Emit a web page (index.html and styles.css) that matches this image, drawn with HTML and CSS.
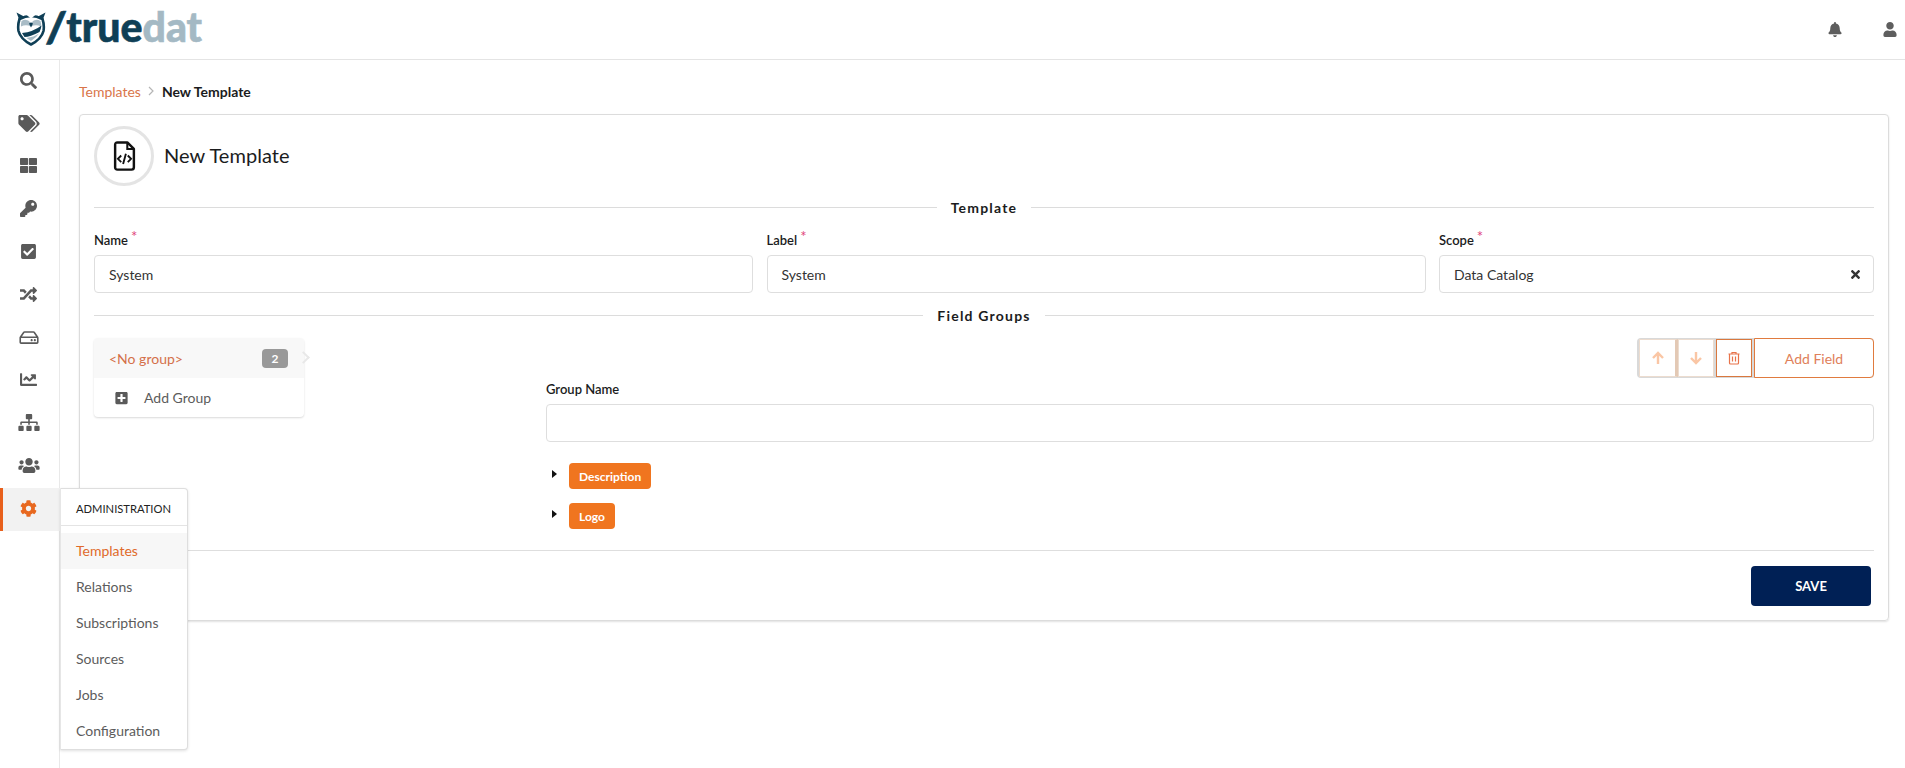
FILE: index.html
```html
<!DOCTYPE html>
<html lang="en">
<head>
<meta charset="utf-8">
<title>New Template</title>
<link rel="stylesheet" href="styles.css">
</head>
<body>
<div class="app">
  <header class="topbar">
    <div class="logo">
      <svg class="owl" viewBox="0 0 30 34" width="30" height="34">
        <path d="M3.5 7 Q15 1 26.5 7 Q28.5 13 27.5 19 Q25.5 27 15 32.5 Q4.5 27 2.5 19 Q1.5 13 3.5 7 Z" fill="none" stroke="#0f3f56" stroke-width="2.6" stroke-linejoin="round"/>
        <path d="M0.5 0.5 L8 4.5 L3.5 8.5 Z M29.5 0.5 L22 4.5 L26.5 8.5 Z" fill="#0f3f56"/>
        <path d="M10 2.5 Q15 .8 20 2.5 L15 6.5 Z" fill="#fff"/>
        <path d="M5.5 9 Q10.5 5.5 15 11 Q19.5 5.5 24.5 9 Q25.5 12 25 14.5 Q20 12 15 14.5 Q10 12 5 14.5 Q4.8 12 5.5 9 Z" fill="#a9bcc6"/>
        <path d="M13 11.5 L15 15.5 L17 11.5 L15 10.5 Z" fill="#0f3f56"/>
        <path d="M6 21 Q17 20 25.5 13.5 Q25 17 23.5 20 Q14 25 8.5 25 Z" fill="#0f3f56"/>
        <path d="M10.5 26 Q18 25 23 21.5 Q20.5 25.5 15 29 Z" fill="#a9bcc6"/>
      </svg>
      <span class="logo-text"><span class="logo-dark slash">/</span><span class="logo-dark">true</span><span class="logo-light">dat</span></span>
    </div>
    <div class="top-icons">
      <svg class="top-icon" viewBox="0 0 448 512"><path d="M224 512c35.32 0 63.97-28.65 63.97-64H160.03c0 35.35 28.65 64 63.97 64zm215.39-149.71c-19.32-20.76-55.47-51.99-55.47-154.29 0-77.7-54.48-139.9-127.94-155.16V32c0-17.67-14.32-32-31.98-32s-31.98 14.33-31.98 32v20.84C118.56 68.1 64.08 130.3 64.08 208c0 102.3-36.15 133.53-55.47 154.29-6 6.45-8.66 14.16-8.61 21.71.11 16.4 12.98 32 32.1 32h383.8c19.12 0 32-15.6 32.1-32 .05-7.55-2.61-15.27-8.61-21.71z"/></svg>
      <svg class="top-icon" viewBox="0 0 448 512"><path d="M224 256c70.7 0 128-57.3 128-128S294.7 0 224 0 96 57.3 96 128s57.3 128 128 128zm89.6 32h-16.7c-22.2 10.2-46.9 16-72.9 16s-50.6-5.8-72.9-16h-16.7C60.2 288 0 348.2 0 422.4V464c0 26.5 21.5 48 48 48h352c26.5 0 48-21.5 48-48v-41.6c0-74.2-60.2-134.4-134.4-134.4z"/></svg>
    </div>
  </header>
  <div class="body-row">
    <nav class="sidebar">
      <div class="side-item"><svg class="side-icon" viewBox="0 0 512 512"><path d="M505 442.7L405.3 343c-4.5-4.5-10.6-7-17-7H372c27.6-35.3 44-79.7 44-128C416 93.1 322.9 0 208 0S0 93.1 0 208s93.1 208 208 208c48.3 0 92.7-16.4 128-44v16.3c0 6.4 2.5 12.5 7 17l99.7 99.7c9.4 9.4 24.6 9.4 33.9 0l28.3-28.3c9.4-9.4 9.4-24.6.1-34zM208 336c-70.7 0-128-57.2-128-128 0-70.7 57.2-128 128-128 70.7 0 128 57.2 128 128 0 70.7-57.2 128-128 128z"/></svg></div>
      <div class="side-item"><svg class="side-icon wide" viewBox="0 0 640 512"><path d="M497.941 225.941L286.059 14.059A48 48 0 0 0 252.118 0H48C21.49 0 0 21.49 0 48v204.118a48 48 0 0 0 14.059 33.941l211.882 211.882c18.744 18.745 49.136 18.746 67.882 0l204.118-204.118c18.745-18.745 18.745-49.137 0-67.882zM112 160c-26.51 0-48-21.49-48-48s21.49-48 48-48 48 21.49 48 48-21.49 48-48 48zm513.941 133.823L421.823 497.941c-18.745 18.745-49.137 18.745-67.882 0l-.36-.36L527.64 323.522c16.999-16.999 26.36-39.6 26.36-63.64s-9.362-46.641-26.36-63.64L331.397 0h48.721a48 48 0 0 1 33.941 14.059l211.882 211.882c18.745 18.745 18.745 49.137 0 67.882z"/></svg></div>
      <div class="side-item"><svg class="side-icon" viewBox="0 0 512 512"><rect x="0" y="32" width="244" height="212" rx="24"/><rect x="268" y="32" width="244" height="212" rx="24"/><rect x="0" y="268" width="244" height="212" rx="24"/><rect x="268" y="268" width="244" height="212" rx="24"/></svg></div>
      <div class="side-item"><svg class="side-icon" viewBox="0 0 512 512"><path d="M512 176.001C512 273.203 433.202 352 336 352c-11.22 0-22.19-1.062-32.827-3.069l-24.012 27.014A23.999 23.999 0 0 1 261.223 384H224v40c0 13.255-10.745 24-24 24h-40v40c0 13.255-10.745 24-24 24H24c-13.255 0-24-10.745-24-24v-78.059c0-6.365 2.529-12.47 7.029-16.971l161.802-161.802C163.108 213.814 160 195.271 160 176 160 78.798 238.797.001 335.999 0 433.488-.001 512 78.511 512 176.001zM336 128c0 26.51 21.49 48 48 48s48-21.49 48-48-21.49-48-48-48-48 21.49-48 48z"/></svg></div>
      <div class="side-item"><svg class="side-icon" viewBox="0 0 448 512"><path d="M400 480H48c-26.51 0-48-21.49-48-48V80c0-26.51 21.49-48 48-48h352c26.51 0 48 21.49 48 48v352c0 26.51-21.49 48-48 48zm-204.686-98.059l184-184c6.248-6.248 6.248-16.379 0-22.627l-22.627-22.627c-6.248-6.248-16.379-6.249-22.628 0L184 302.745l-70.059-70.059c-6.248-6.248-16.379-6.248-22.628 0l-22.627 22.627c-6.248 6.248-6.248 16.379 0 22.627l104 104c6.249 6.25 16.379 6.25 22.628.001z"/></svg></div>
      <div class="side-item"><svg class="side-icon" viewBox="0 0 512 512"><path d="M504.971 359.029c9.373 9.373 9.373 24.569 0 33.941l-80 79.984c-15.01 15.01-40.971 4.49-40.971-16.971V416h-58.785a12.004 12.004 0 0 1-8.773-3.812l-70.556-75.596 53.333-57.143L352 336h32v-39.981c0-21.438 25.943-31.998 40.971-16.971l80 79.981zM12 176h84l52.781 56.551 53.333-57.143-70.556-75.596A11.999 11.999 0 0 0 122.785 96H12c-6.627 0-12 5.373-12 12v56c0 6.627 5.373 12 12 12zm372 0v39.984c0 21.46 25.961 31.98 40.971 16.971l80-79.984c9.373-9.373 9.373-24.569 0-33.941l-80-79.981C409.943 24.021 384 34.582 384 56.019V96h-58.785a12.004 12.004 0 0 0-8.773 3.812L96 336H12c-6.627 0-12 5.373-12 12v56c0 6.627 5.373 12 12 12h110.785c3.326 0 6.503-1.381 8.773-3.812L352 176h32z"/></svg></div>
      <div class="side-item"><svg class="side-icon wide-s" viewBox="0 0 576 512"><path d="M567.403 235.642L462.323 84.589A48 48 0 0 0 422.919 64H153.081a48 48 0 0 0-39.404 20.589L8.597 235.642A48.001 48.001 0 0 0 0 263.054V400c0 26.51 21.49 48 48 48h480c26.51 0 48-21.49 48-48V263.054c0-9.801-3-19.366-8.597-27.412zM153.081 112h269.838l77.913 112H75.168l77.913-112zM528 400H48V272h480v128zm-32-64c0 17.673-14.327 32-32 32s-32-14.327-32-32 14.327-32 32-32 32 14.327 32 32zm-96 0c0 17.673-14.327 32-32 32s-32-14.327-32-32 14.327-32 32-32 32 14.327 32 32z"/></svg></div>
      <div class="side-item"><svg class="side-icon" viewBox="0 0 512 512"><path d="M496 384H64V80c0-8.84-7.16-16-16-16H16C7.16 64 0 71.16 0 80v336c0 17.67 14.33 32 32 32h464c8.84 0 16-7.16 16-16v-32c0-8.84-7.16-16-16-16zM464 96H345.94c-21.38 0-32.09 25.85-16.97 40.97l32.4 32.4L288 242.75l-73.37-73.37c-12.5-12.5-32.76-12.5-45.25 0l-68.69 68.69c-6.25 6.25-6.25 16.38 0 22.63l22.62 22.62c6.25 6.25 16.38 6.25 22.63 0L192 237.25l73.37 73.37c12.5 12.5 32.76 12.5 45.25 0l96-96 32.4 32.4c15.12 15.12 40.97 4.41 40.97-16.97V112c.01-8.84-7.15-16-16-16z"/></svg></div>
      <div class="side-item"><svg class="side-icon wide" viewBox="0 0 640 512"><path d="M128 352H32c-17.67 0-32 14.33-32 32v96c0 17.67 14.33 32 32 32h96c17.67 0 32-14.33 32-32v-96c0-17.67-14.33-32-32-32zm-24-80h192v48h48v-48h192v48h48v-57.59c0-21.17-17.23-38.41-38.41-38.41H344v-64h40c17.67 0 32-14.33 32-32V32c0-17.67-14.33-32-32-32H256c-17.67 0-32 14.33-32 32v96c0 17.67 14.33 32 32 32h40v64H94.41C73.23 224 56 241.23 56 262.41V320h48v-48zm264 80h-96c-17.67 0-32 14.33-32 32v96c0 17.67 14.33 32 32 32h96c17.67 0 32-14.33 32-32v-96c0-17.67-14.33-32-32-32zm240 0h-96c-17.67 0-32 14.33-32 32v96c0 17.67 14.33 32 32 32h96c17.67 0 32-14.33 32-32v-96c0-17.67-14.33-32-32-32z"/></svg></div>
      <div class="side-item"><svg class="side-icon wide" viewBox="0 0 640 512"><path d="M96 224c35.3 0 64-28.7 64-64s-28.7-64-64-64-64 28.7-64 64 28.7 64 64 64zm448 0c35.3 0 64-28.7 64-64s-28.7-64-64-64-64 28.7-64 64 28.7 64 64 64zm32 32h-64c-17.6 0-33.5 7.1-45.1 18.6 40.3 22.1 68.9 62 75.1 109.4h66c17.7 0 32-14.3 32-32v-32c0-35.3-28.7-64-64-64zm-256 0c61.9 0 112-50.1 112-112S381.9 32 320 32 208 82.1 208 144s50.1 112 112 112zm76.8 32h-8.3c-20.8 10-43.9 16-68.5 16s-47.6-6-68.5-16h-8.3C179.6 288 128 339.6 128 403.2V432c0 26.5 21.5 48 48 48h288c26.5 0 48-21.5 48-48v-28.8c0-63.6-51.6-115.2-115.2-115.2zm-223.7-13.4C161.5 263.1 145.6 256 128 256H64c-35.3 0-64 28.7-64 64v32c0 17.7 14.3 32 32 32h65.9c6.3-47.4 34.9-87.3 75.2-109.4z"/></svg></div>
      <div class="side-item active"><svg class="side-icon" viewBox="0 0 512 512"><path d="M487.4 315.7l-42.6-24.6c4.3-23.2 4.3-47 0-70.2l42.6-24.6c4.9-2.8 7.1-8.6 5.5-14-11.1-35.6-30-67.8-54.7-94.6-3.8-4.1-10-5.1-14.8-2.3L380.8 110c-17.9-15.4-38.5-27.3-60.8-35.1V25.8c0-5.6-3.9-10.5-9.4-11.7-36.7-8.2-74.3-7.8-109.2 0-5.5 1.2-9.4 6.1-9.4 11.7V75c-22.2 7.9-42.8 19.8-60.8 35.1L88.7 85.5c-4.9-2.8-11-1.9-14.8 2.3-24.7 26.7-43.6 58.9-54.7 94.6-1.7 5.4.6 11.2 5.5 14L67.3 221c-4.3 23.2-4.3 47 0 70.2l-42.6 24.6c-4.9 2.8-7.1 8.6-5.5 14 11.1 35.6 30 67.8 54.7 94.6 3.8 4.1 10 5.1 14.8 2.3l42.6-24.6c17.9 15.4 38.5 27.3 60.8 35.1v49.2c0 5.6 3.9 10.5 9.4 11.7 36.7 8.2 74.3 7.8 109.2 0 5.5-1.2 9.4-6.1 9.4-11.7v-49.2c22.2-7.9 42.8-19.8 60.8-35.1l42.6 24.6c4.9 2.8 11 1.9 14.8-2.3 24.7-26.7 43.6-58.9 54.7-94.6 1.5-5.5-.7-11.3-5.6-14.1zM256 336c-44.1 0-80-35.9-80-80s35.9-80 80-80 80 35.9 80 80-35.9 80-80 80z"/></svg>
        <div class="popup">
          <div class="popup-head">ADMINISTRATION</div>
          <div class="popup-list">
            <div class="popup-item current">Templates</div>
            <div class="popup-item">Relations</div>
            <div class="popup-item">Subscriptions</div>
            <div class="popup-item">Sources</div>
            <div class="popup-item">Jobs</div>
            <div class="popup-item">Configuration</div>
          </div>
        </div>
      </div>
    </nav>
    <main class="content">
      <div class="crumbs"><a class="crumb-link">Templates</a>
        <svg class="crumb-sep" viewBox="0 0 6 10" width="6" height="10"><path d="M1 1 L5 5 L1 9" fill="none" stroke="#b5b5b5" stroke-width="1.2"/></svg>
        <span class="crumb-now">New Template</span></div>
      <section class="card">
        <div class="card-head">
          <div class="circle">
            <svg viewBox="0 0 24 32" width="23" height="30">
              <path d="M2 4 Q2 1.5 4.5 1.5 H15 L22 8.5 V28 Q22 30.5 19.5 30.5 H4.5 Q2 30.5 2 28 Z" fill="none" stroke="#111" stroke-width="2.6" stroke-linejoin="round"/>
              <path d="M15 2 V8.5 H22" fill="none" stroke="#111" stroke-width="2.2"/>
              <path d="M8.5 15.5 L5 19 L8.5 22.5 M15.5 15.5 L19 19 L15.5 22.5 M13.5 13.5 L10.5 24.5" fill="none" stroke="#111" stroke-width="2"/>
            </svg>
          </div>
          <h1 class="card-title">New Template</h1>
        </div>
        <div class="divider first"><span>Template</span></div>
        <div class="fields">
          <div class="field">
            <label class="lbl">Name<i class="req">*</i></label>
            <div class="input">System</div>
          </div>
          <div class="field">
            <label class="lbl">Label<i class="req">*</i></label>
            <div class="input">System</div>
          </div>
          <div class="field">
            <label class="lbl">Scope<i class="req">*</i></label>
            <div class="input select">Data Catalog
              <svg class="clear" viewBox="0 0 352 512"><path d="M242.72 256l100.07-100.07c12.28-12.28 12.28-32.19 0-44.48l-22.24-22.24c-12.28-12.28-32.19-12.28-44.48 0L176 189.28 75.93 89.21c-12.28-12.28-32.19-12.28-44.48 0L9.21 111.45c-12.28 12.28-12.28 32.19 0 44.48L109.28 256 9.21 356.07c-12.28 12.28-12.28 32.19 0 44.48l22.24 22.24c12.28 12.28 32.2 12.28 44.48 0L176 322.72l100.07 100.07c12.28 12.28 32.2 12.28 44.48 0l22.24-22.24c12.28-12.28 12.28-32.19 0-44.48L242.72 256z"/></svg>
            </div>
          </div>
        </div>
        <div class="divider second"><span>Field Groups</span></div>
        <div class="groups">
          <div class="group-menu-wrap">
            <div class="group-menu">
              <div class="group-row selected"><span>&lt;No group&gt;</span><b class="badge">2</b></div>
              <div class="group-row add">
                <svg class="plus" viewBox="0 0 448 512"><path d="M400 32H48C21.5 32 0 53.5 0 80v352c0 26.5 21.5 48 48 48h352c26.5 0 48-21.5 48-48V80c0-26.5-21.5-48-48-48zm-32 252c0 6.6-5.4 12-12 12h-92v92c0 6.6-5.4 12-12 12h-56c-6.6 0-12-5.4-12-12v-92H92c-6.6 0-12-5.4-12-12v-56c0-6.6 5.4-12 12-12h92v-92c0-6.6 5.4-12 12-12h56c6.6 0 12 5.4 12 12v92h92c6.6 0 12 5.4 12 12v56z"/></svg>
                <span>Add Group</span>
              </div>
            </div>
            <div class="menu-arrow"></div>
          </div>
          <div class="group-detail">
            <div class="btn-bar">
              <div class="btn-group">
                <div class="btn off first-btn"><svg viewBox="0 0 14 14" width="14" height="14"><path d="M7 13 V2 M2 7 L7 2 L12 7" fill="none" stroke="#f47a2a" stroke-width="2.4"/></svg></div>
                <div class="btn off"><svg viewBox="0 0 14 14" width="14" height="14"><path d="M7 1 V12 M2 7 L7 12 L12 7" fill="none" stroke="#f47a2a" stroke-width="2.4"/></svg></div>
                <div class="btn trash"><svg viewBox="0 0 12 14" width="12" height="14"><path d="M1.5 3.5 V12 Q1.5 13 2.5 13 H9.5 Q10.5 13 10.5 12 V3.5 M0.5 3 H11.5 M4 3 V1.5 H8 V3 M4.5 5.5 V10.5 M7.5 5.5 V10.5" fill="none" stroke="#e8734a" stroke-width="1.2"/></svg></div>
                <div class="btn add-field">Add Field</div>
              </div>
            </div>
            <label class="lbl plain">Group Name</label>
            <div class="input tall"></div>
            <div class="tag-row"><span class="tri"></span><span class="tag">Description</span></div>
            <div class="tag-row"><span class="tri"></span><span class="tag">Logo</span></div>
          </div>
        </div>
        <div class="card-foot"><div class="save">SAVE</div></div>
      </section>
    </main>
  </div>
</div>
</body>
</html>
```

FILE: styles.css
```css
* { box-sizing: border-box; }
html, body { margin: 0; padding: 0; height: 100%; overflow: hidden; background: #fff; }
body { font-family: "Lato", "Liberation Sans", sans-serif; font-size: 14px; color: #1b1c1d; }
.app { display: flex; flex-direction: column; height: 768px; }

.topbar { height: 60px; flex: none; display: flex; align-items: center; justify-content: space-between; border-bottom: 1px solid #e4e4e4; padding: 0 8px 0 16px; }
.logo { display: flex; align-items: center; height: 59px; }
.owl { display: block; margin-top: -1px; }
.logo-text { font-family: "Lato", sans-serif; font-weight: 900; font-size: 41px; line-height: 1; letter-spacing: 0; margin-top: -7px; margin-left: -1px; -webkit-text-stroke: .6px currentColor; }
.logo-dark { color: #0f3f56; }
.logo-dark.slash { display: inline-block; transform: scaleX(1.15); transform-origin: left center; margin-right: 2px; }
.logo-light { color: #a4b9c4; }
.top-icons { display: flex; align-items: center; gap: 41px; }
.top-icon { width: 14px; height: 15px; fill: #5e5e5e; display: block; }

.body-row { flex: 1; display: flex; min-height: 0; }
.sidebar { width: 60px; flex: none; border-right: 1px solid #e9e9e9; }
.side-item { height: 42.8px; display: flex; align-items: center; justify-content: center; position: relative; padding: 0 2px 2px 0; }
.side-icon { width: 17px; height: 17px; fill: #5a5a5a; display: block; }
.side-icon.wide { width: 22px; }
.side-icon.wide-s { width: 20px; }
.side-item.active { background: #f2f2f2; border-left: 3px solid #e8601c; margin-right: -1px; padding: 0 6px 2px 0; }
.side-item.active .side-icon { fill: #e8681f; }

.popup { position: absolute; left: 57px; top: 0; width: 128px; height: 262px; background: #fff; border: 1px solid #dedede; border-left: 1px solid #e6e6e6; border-radius: 0 4px 4px 0; box-shadow: 0 1px 3px rgba(0,0,0,.12); z-index: 5; }
.popup-head { height: 37px; display: flex; align-items: center; padding: 4px 0 0 15px; font-size: 11.2px; color: #222; border-bottom: 1px solid #e4e4e4; }
.popup-list { padding-top: 7px; }
.popup-item { height: 36px; display: flex; align-items: center; padding-left: 15px; font-size: 14px; color: #5c5c5c; }
.popup-item.current { background: #f7f7f7; color: #e06a2a; }

.content { flex: 1; min-width: 0; padding: 22px 16px 0 19px; }
.crumbs { display: flex; align-items: center; height: 18px; font-size: 14px; margin-bottom: 14px; }
.crumb-link { color: #d9754a; }
.crumb-sep { margin: 0 8px 0 7px; display: block; }
.crumb-now { color: #1b1c1d; font-weight: 700; font-size: 14px; }

.card { border: 1px solid #dcdcdc; border-radius: 4px; padding: 11px 14px 13px; box-shadow: 0 1px 2px rgba(0,0,0,.12); height: 507px; }
.card-head { display: flex; align-items: center; gap: 10px; height: 60px; }
.circle { width: 60px; height: 60px; border-radius: 50%; border: 3px solid #e4e4e4; display: flex; align-items: center; justify-content: center; }
.card-title { margin: 0 0 3px; font-weight: 400; font-size: 20px; letter-spacing: .05px; color: #1b1c1d; }

.divider { display: flex; align-items: center; gap: 14px; font-weight: 700; font-size: 14px; letter-spacing: 1.2px; color: #1b1c1d; height: 20px; }
.divider::before, .divider::after { content: ""; flex: 1; border-top: 1px solid #dcdcdc; }
.divider.first { margin-top: 11px; }
.divider.second { margin-top: 12px; }

.fields { display: grid; grid-template-columns: 659px 659px 435px; column-gap: 13.5px; margin-top: 15px; }
.field { display: flex; flex-direction: column; min-width: 0; }
.lbl { font-size: 13px; font-weight: 600; color: #1b1c1d; height: 23px; display: block; line-height: 16px; }
.req { color: #e0457a; font-style: normal; font-size: 15px; margin-left: 3px; position: relative; top: -3px; font-weight: 400; line-height: 1; }
.input { height: 38px; border: 1px solid #dedede; border-radius: 4px; display: flex; align-items: center; padding: 0 14px; font-size: 14px; color: #333; background: #fff; }
.select { justify-content: space-between; padding-right: 13px; }
.clear { width: 9px; height: 13px; fill: #333; }

.groups { display: flex; margin-top: 13px; }
.group-menu-wrap { width: 452px; flex: none; position: relative; }
.group-menu { width: 210px; height: 79px; border-radius: 4px; box-shadow: 0 1px 2px rgba(0,0,0,.15); background: #fff; overflow: hidden; }
.group-row { height: 40px; display: flex; align-items: center; font-size: 14px; color: #5c5c5c; }
.group-row.selected { background: #f8f8f8; color: #d4704a; justify-content: space-between; padding: 0 16px 0 15px; }
.badge { background: #999; color: #fff; font-size: 12px; font-weight: 700; width: 26px; height: 19px; border-radius: 4px; display: flex; align-items: center; justify-content: center; }
.group-row.add { padding-left: 21px; gap: 16px; height: 39px; }
.plus { width: 13px; height: 14px; fill: #5a5a5a; }
.menu-arrow { position: absolute; left: 205px; top: 15px; width: 9px; height: 9px; border-top: 2px solid #e8e8e8; border-right: 2px solid #e8e8e8; transform: rotate(45deg); }
.group-detail { flex: 1; min-width: 0; }
.btn-bar { display: flex; justify-content: flex-end; height: 40px; }
.btn-group { display: flex; background: #d9d9d9; border-radius: 4px; padding: 1px 0 1px 2px; height: 40px; gap: 2px; }
.btn { width: 36px; height: 38px; background: #fff; display: flex; align-items: center; justify-content: center; }
.btn.off { border: 1px solid #ecdccf; }
.btn.off svg { opacity: .42; }
.btn.first-btn { margin-right: -2px; border-right: 3px solid #e3c9b5; width: 39px; }
.btn.trash { border: 1px solid #d9783e; }
.btn.add-field { width: 120px; height: 40px; margin-top: -1px; border: 1px solid #e07b3f; border-radius: 0 4px 4px 0; font-size: 14px; color: #e0805a; }
.lbl.plain { margin-top: 0; padding-top: 3px; height: 26px; font-size: 13px; }
.tall { height: 38px; }
.tag-row { display: flex; align-items: center; height: 26px; padding-left: 6px; margin-top: 14px; }
.input + .tag-row { margin-top: 21px; }
.tri { width: 0; height: 0; border-left: 5px solid #111; border-top: 4px solid transparent; border-bottom: 4px solid transparent; margin-right: 12px; margin-top: -4px; }
.tag { height: 26px; background: #f0751f; color: #fff; font-weight: 700; font-size: 12px; border-radius: 4px; padding: 0 10px; display: flex; align-items: center; }

.card-foot { border-top: 1px solid #dedede; margin-top: 21px; padding-top: 15px; display: flex; justify-content: flex-end; padding-right: 3px; }
.save { width: 120px; height: 40px; background: #002055; color: #fff; border-radius: 4px; font-weight: 700; font-size: 13px; display: flex; align-items: center; justify-content: center; }
```
